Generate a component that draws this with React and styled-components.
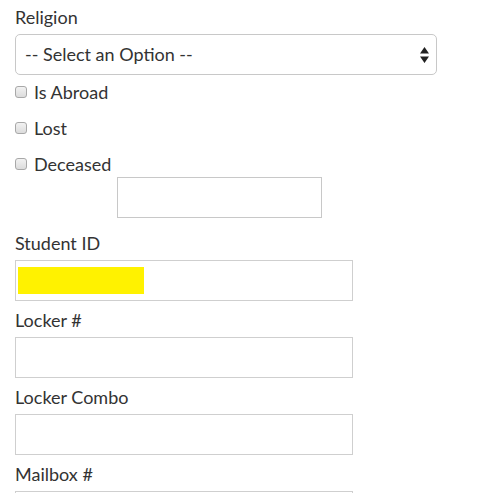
import React from "react";
import styled, { createGlobalStyle } from "styled-components";

const Global = createGlobalStyle`
  html, body { margin: 0; padding: 0; background: #fff; }
  body { font-family: Lato, "Open Sans", sans-serif; color: #333; }
  * { box-sizing: border-box; }
`;

const Page = styled.div`
  padding: 7px 15px 0;
  width: 500px;
  height: 493px;
  overflow: hidden;
`;

const Label = styled.div`
  font-size: 18px;
  line-height: 20px;
  margin-bottom: 7px;
`;

const Group = styled.div`
  margin-bottom: 9px;
`;

const Select = styled.div`
  width: 422px;
  height: 41px;
  border: 1px solid #c8c8c8;
  border-radius: 5px;
  display: flex;
  align-items: center;
  justify-content: space-between;
  padding: 0 7px 2px 9px;
  font-size: 18px;
`;

const Arrows = styled.svg`
  width: 9px;
  height: 16px;
  margin-top: 2px;
`;

const Checks = styled.div`
  display: flex;
  flex-direction: column;
  gap: 14px;
  padding-top: 6px;
`;

const CheckRow = styled.label`
  display: flex;
  align-items: center;
  height: 22px;
  font-size: 18px;
  line-height: 20px;
  gap: 7px;
  padding-bottom: 1px;
`;

const Box = styled.span`
  width: 12px;
  height: 12px;
  border: 1px solid #a8a8a8;
  border-radius: 3px;
  background: linear-gradient(#f2f2f2, #dcdcdc);
`;

const Blank = styled.div`
  margin: 2px 0 15px 102px;
  width: 205px;
  height: 41px;
  border: 1px solid #c8c8c8;
`;

const TextBox = styled.div`
  width: 338px;
  height: 41px;
  border: 1px solid #cfcfcf;
  display: flex;
  align-items: center;
  padding: 0 2px;
`;

const Redaction = styled.span`
  width: 126px;
  height: 27px;
  background: #fff200;
`;

const Field = ({ label, children }) => (
  <Group>
    <Label>{label}</Label>
    <TextBox>{children}</TextBox>
  </Group>
);

export default function App() {
  return (
    <>
      <Global />
      <Page>
        <Label>Religion</Label>
        <Select>
          <span>-- Select an Option --</span>
          <Arrows viewBox="0 0 9 16">
            <path d="M4.5 0 L9 6.5 H0 Z M0 9.5 H9 L4.5 16 Z" fill="#222" />
          </Arrows>
        </Select>
        <Checks>
          <CheckRow><Box />Is Abroad</CheckRow>
          <CheckRow><Box />Lost</CheckRow>
          <CheckRow><Box />Deceased</CheckRow>
        </Checks>
        <Blank />
        <Field label="Student ID"><Redaction /></Field>
        <Field label="Locker #" />
        <Field label="Locker Combo" />
        <Field label="Mailbox #" />
      </Page>
    </>
  );
}
